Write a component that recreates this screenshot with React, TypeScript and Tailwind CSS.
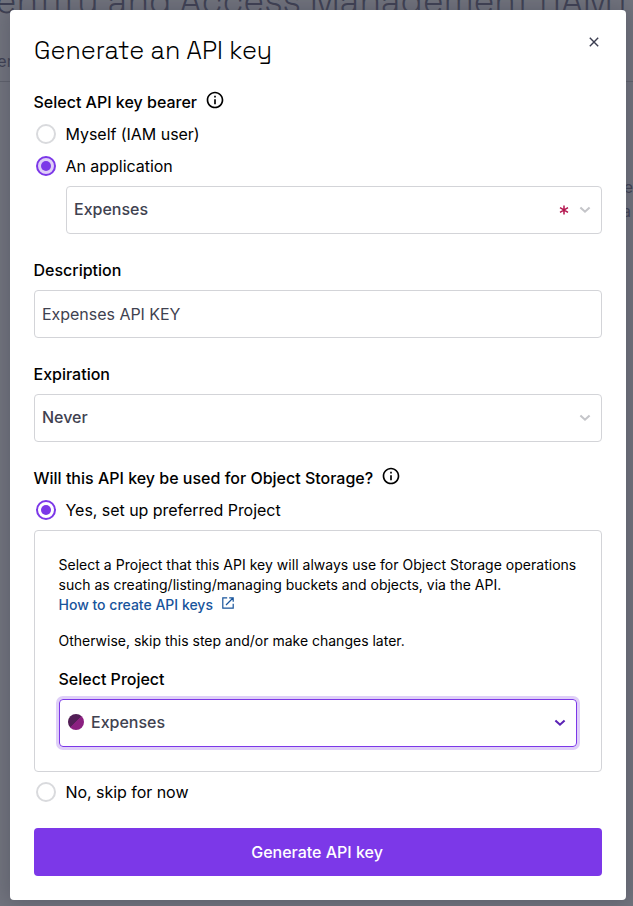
import type { ReactNode } from 'react';

function InfoIcon() {
  return (
    <svg width="20" height="20" viewBox="0 0 24 24" className="-mt-1 shrink-0 fill-black">
      <path d="M11 7h2v2h-2zm0 4h2v6h-2zm1-9C6.48 2 2 6.48 2 12s4.48 10 10 10 10-4.48 10-10S17.52 2 12 2zm0 18c-4.41 0-8-3.59-8-8s3.59-8 8-8 8 3.59 8 8-3.59 8-8 8z" />
    </svg>
  );
}

function Chevron({ className }: { className: string }) {
  return (
    <svg width="12" height="8" viewBox="0 0 12 8" fill="none" strokeWidth="2.1" className={className}>
      <path d="M1.4 1.5 6 5.7l4.6-4.2" />
    </svg>
  );
}

function Radio({ label, checked, tinted }: { label: string; checked?: boolean; tinted?: boolean }) {
  return (
    <div className="flex h-6 items-center pl-0.5">
      <span
        className={`flex size-5 items-center justify-center rounded-full border-2 ${
          checked ? 'border-[#7c38e8]' : 'border-[#d9dadd]'
        } ${tinted ? 'bg-[#dfcff8]' : 'bg-white'}`}
      >
        {checked && <span className="size-2.5 rounded-full bg-[#7c38e8]" />}
      </span>
      <span className="ml-[9.5px] whitespace-nowrap text-base leading-6 tracking-[-0.04px]">{label}</span>
    </div>
  );
}

function Heading({ children, info }: { children: ReactNode; info?: boolean }) {
  return (
    <div className="-ml-[0.5px] flex h-6 items-center gap-[7.5px]">
      <span className="whitespace-nowrap text-base font-medium leading-6">{children}</span>
      {info && <InfoIcon />}
    </div>
  );
}

export default function App() {
  return (
    <div className="relative h-[906px] w-[633px] overflow-hidden bg-[#72747e] font-['Inter',sans-serif] text-black">
      <div className="absolute -left-[35px] -top-[19px] w-[702px] text-[#3b3d50]">
        <h1 className="whitespace-nowrap font-['Space_Grotesk','Inter',sans-serif] text-[35px] font-[350] leading-10 tracking-[-0.14px]">
          Identity and Access Management (IAM)
        </h1>
        <div className="mt-[28px] flex h-[33px] border-b border-[#5e606b] pl-3 text-base leading-6">
          <span>Users</span>
        </div>
        <div className="mt-[93px] flex flex-col items-end pr-[34px] text-base leading-6">
          <span>the</span>
          <span className="mr-0.5">a</span>
        </div>
      </div>

      <div className="absolute left-[10px] top-[10px] h-[890px] w-[616px] rounded bg-white p-6 shadow-[0_0_20px_3px_rgba(75,78,92,0.5)]">
        <div className="flex h-8 justify-between">
          <h2 className="whitespace-nowrap font-['Space_Grotesk','Inter',sans-serif] text-[25px] font-[350] leading-8">
            Generate an API key
          </h2>
          <svg width="16" height="16" viewBox="0 0 16 16" fill="none" className="stroke-[#3b3d50]" strokeWidth="1.4">
            <path d="m3.8 3.8 8.4 8.4m0-8.4-8.4 8.4" />
          </svg>
        </div>

        <div className="mt-6 flex flex-col gap-2">
          <Heading info>Select API key bearer</Heading>
          <Radio label="Myself (IAM user)" />
          <Radio label="An application" checked tinted />
          <div className="ml-8 flex h-12 items-center rounded border border-[#d3d4d8] pl-[7px] pr-2.5">
            <span className="flex-1 pb-0.5 text-base font-medium leading-6 text-[#3f4250]">Expenses</span>
            <svg width="10" height="10" viewBox="0 0 10 10" className="mr-2.5 stroke-[#b3144d]" strokeWidth="1.5">
              <path d="M5 .5v9M1 2.7l8 4.6M9 2.7 1 7.3" />
            </svg>
            <Chevron className="stroke-[#c4c5c9]" />
          </div>
        </div>

        <div className="mt-6 flex flex-col gap-2">
          <Heading>Description</Heading>
          <div className="flex h-12 items-center rounded border border-[#d3d4d8] px-[7px] text-base leading-6 tracking-[-0.03px] text-[#3f4250]">
            Expenses API KEY
          </div>
        </div>

        <div className="mt-6 flex flex-col gap-2">
          <Heading>Expiration</Heading>
          <div className="flex h-12 items-center justify-between rounded border border-[#d3d4d8] pl-[7px] pr-2.5">
            <span className="pb-0.5 text-base font-medium leading-6 text-[#3f4250]">Never</span>
            <Chevron className="stroke-[#c4c5c9]" />
          </div>
        </div>

        <div className="mt-6 flex flex-col gap-2">
          <Heading info>Will this API key be used for Object Storage?</Heading>
          <Radio label="Yes, set up preferred Project" checked />
          <div className="h-[242px] rounded border border-[#d3d4d8] p-6 text-sm leading-5">
            <div className="-ml-[0.5px]">
              <p className="whitespace-nowrap tracking-[0.02px]">
                Select a Project that this API key will always use for Object Storage operations
              </p>
              <p className="whitespace-nowrap">such as creating/listing/managing buckets and objects, via the API.</p>
              <div className="flex items-center gap-[9px] font-medium text-[#17549c]">
                <span>How to create API keys</span>
                <svg width="12" height="12" viewBox="0 0 12 12" fill="none" className="-mt-1 stroke-[#17549c]" strokeWidth="1.2">
                  <path d="M5.2.8H.8v10.4h10.4V6.8M7.2.8h4v4M11 1 4 8" />
                </svg>
              </div>
              <p className="mt-4 whitespace-nowrap">Otherwise, skip this step and/or make changes later.</p>
            </div>
            <div className="mt-4">
              <Heading>Select Project</Heading>
            </div>
            <div className="mt-2 flex h-12 items-center rounded border border-[#7c38e8] pl-2 pr-2.5 shadow-[0_0_0_3px_#dfcff8]">
              <span className="mb-0.5 size-4 rounded-full bg-[linear-gradient(135deg,#521e56_50%,#8b2080_50%)]" />
              <span className="ml-[7px] flex-1 pb-0.5 text-base font-medium leading-6 text-[#3f4250]">Expenses</span>
              <Chevron className="stroke-[#5b23b5]" />
            </div>
          </div>
          <Radio label="No, skip for now" />
        </div>

        <button className="mt-6 flex h-12 w-full items-center justify-center rounded bg-[#7c38e8] pr-0.5 text-base font-medium leading-6 text-white">
          Generate API key
        </button>
      </div>
    </div>
  );
}
